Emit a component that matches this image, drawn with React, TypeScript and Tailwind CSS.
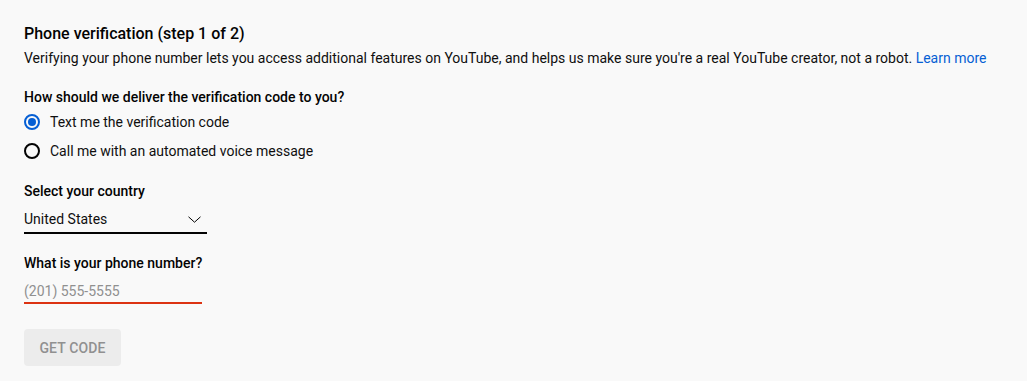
import { useState } from 'react';

const Radio = ({ checked, label, onSelect }: { checked: boolean; label: string; onSelect: () => void }) => (
  <label className="flex h-[29px] cursor-pointer items-center" onClick={onSelect}>
    <span
      className={`flex h-4 w-4 items-center justify-center rounded-full border-2 ${
        checked ? 'border-[#065fd4]' : 'border-[#030303]'
      }`}
    >
      {checked && <span className="h-2 w-2 rounded-full bg-[#065fd4]" />}
    </span>
    <span className="ml-[10px] text-sm leading-5 text-[#0f0f0f]">{label}</span>
  </label>
);

export default function App() {
  const [method, setMethod] = useState<'text' | 'call'>('text');

  return (
    <div className="min-h-[381px] w-full bg-[#f9f9f9] pl-6 pt-[22px] font-['Roboto','Liberation_Sans',sans-serif] text-[#0f0f0f]">
      {/* Heading */}
      <h1 className="text-base leading-6 font-medium text-[#030303]">Phone verification (step 1 of 2)</h1>
      <p className="mt-[2px] text-sm leading-5 text-[#0f0f0f]">
        Verifying your phone number lets you access additional features on YouTube, and helps us make sure you're a
        real YouTube creator, not a robot. <a className="text-[#065fd4]">Learn more</a>
      </p>

      {/* Delivery method */}
      <div className="mt-[19px] text-sm leading-5 font-medium text-[#030303]">
        How should we deliver the verification code to you?
      </div>
      <div className="flex flex-col">
        <Radio checked={method === 'text'} label="Text me the verification code" onSelect={() => setMethod('text')} />
        <Radio
          checked={method === 'call'}
          label="Call me with an automated voice message"
          onSelect={() => setMethod('call')}
        />
      </div>

      {/* Country */}
      <div className="mt-4 text-sm leading-5 font-medium text-[#030303]">Select your country</div>
      <div className="mt-2 flex w-[183px] items-center justify-between border-b-2 border-[#030303] pb-[3px]">
        <span className="text-sm leading-5 text-[#0f0f0f]">United States</span>
        <svg width="13" height="7" viewBox="0 0 13 7" className="mr-[6px]" fill="none">
          <path d="M0.5 0.8l6 5.4 6-5.4" stroke="#030303" strokeWidth="1" />
        </svg>
      </div>

      {/* Phone */}
      <div className="mt-[19px] text-sm leading-5 font-medium text-[#030303]">What is your phone number?</div>
      <div className="mt-2 w-[178px] border-b-2 border-[#dc3312] pb-px">
        <input
          className="block h-5 w-full bg-transparent p-0 text-sm leading-5 text-[#0f0f0f] placeholder-[#909090] outline-none"
          placeholder="(201) 555-5555"
        />
      </div>

      <button
        disabled
        className="mt-[25px] flex h-[37px] w-[97px] items-center justify-center rounded-sm bg-[#ececec] text-sm font-medium tracking-[0.01em] text-[#909090] uppercase"
      >
        Get code
      </button>
    </div>
  );
}
